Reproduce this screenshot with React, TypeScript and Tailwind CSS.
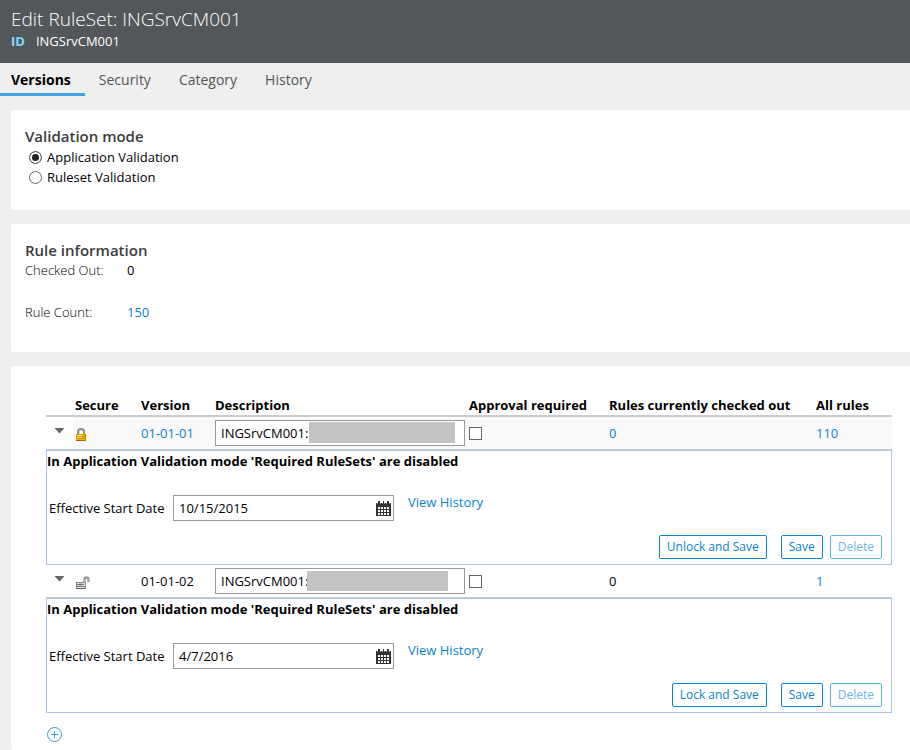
import React, { useState } from "react";

type Version = {
  id: string;
  locked: boolean;
  description: string;
  redaction: string;
  checkedOut: number;
  total: number;
  date: string;
};

const versions: Version[] = [
  {
    id: "01-01-01",
    locked: true,
    description: "INGSrvCM001:",
    redaction: "left-[94px] top-[2px] h-[21px] w-[146px]",
    checkedOut: 0,
    total: 110,
    date: "10/15/2015",
  },
  {
    id: "01-01-02",
    locked: false,
    description: "INGSrvCM001:",
    redaction: "left-[92px] top-[3px] h-5 w-[141px]",
    checkedOut: 0,
    total: 1,
    date: "4/7/2016",
  },
];

const tabs = ["Versions", "Security", "Category", "History"];

const linkClass = "text-[#0a84cc] hover:underline";

function LockedIcon() {
  return (
    <svg width="12" height="14" viewBox="0 0 12 14" aria-hidden="true">
      <path d="M3 7V3.500C3 1.800 4.200 1 6 1s3 .8 3 2.500V7" fill="none" stroke="#8d8d8d" strokeWidth="2" />
      <path d="M4.500 6V4c0-1 .6-1.500 1.500-1.500" fill="none" stroke="#d8d8d8" strokeWidth="1" />
      <rect x="1" y="6" width="10" height="7" fill="#f5b800" />
      <path d="M1 6h10v1H1z" fill="#d99a00" />
      <path d="M2 7h5v1H2z" fill="#ffe98a" />
      <path d="M2 9h5v1H2z" fill="#ffe36a" />
      <path d="M1 8h10v1H1zM1 10h10v1H1z" fill="#cf9408" />
      <path d="M1 12h10v1H1z" fill="#9a6a00" />
      <path d="M10 6h1v7h-1z" fill="#b67d00" />
    </svg>
  );
}

function UnlockedIcon() {
  return (
    <svg width="15" height="14" viewBox="-1 0 15 14" aria-hidden="true">
      <path d="M8.500 7V3.500C8.500 2 9.300 1.500 10.500 1.500s2 .6 2 2V6" fill="none" stroke="#707070" strokeWidth="2" />
      <path d="M8.500 6V3.500c0-1 .8-1.800 2-1.800s1.800.6 1.800 1.800V6" fill="none" stroke="#e4e4e4" strokeWidth="0.6" />
      <rect x="0.500" y="6.500" width="9" height="6" fill="#e9e9e9" stroke="#8a8a8a" />
      <path d="M1 8.500h7M1 10.500h8" stroke="#767676" strokeWidth="1" />
      <path d="M3 7.500h4M2 9.500h4" stroke="#c4c4c4" strokeWidth="1" />
      <path d="M0 12.500h9" stroke="#666" strokeWidth="1" />
    </svg>
  );
}

function CalendarIcon() {
  return (
    <svg width="15" height="17" viewBox="0 0 15 17" shapeRendering="crispEdges" aria-hidden="true">
      <path d="M0 3h15v13H0z" fill="#333" />
      <path d="M2 1h2v3H2zM7 1h1v3H7zM11 1h2v3h-2z" fill="#333" />
      <path d="M1 3h1v1H1zM4 3h1v1H4zM6 3h1v1H6zM8 3h1v1H8zM10 3h1v1h-1zM13 3h1v1h-1z" fill="#999" />
      <path
        d="M2 7h2v2H2zM5 7h2v2H5zM8 7h2v2H8zM11 7h2v2h-2zM2 10h2v2H2zM5 10h2v2H5zM8 10h2v2H8zM11 10h2v2h-2zM2 13h2v2H2zM5 13h2v2H5zM8 13h2v2H8zM11 13h2v2h-2z"
        fill="#fff"
      />
    </svg>
  );
}

function ActionButton({ children, disabled }: { children: React.ReactNode; disabled?: boolean }) {
  return (
    <button
      type="button"
      disabled={disabled}
      className="h-6 rounded-xs border border-[#0a84cc] px-[7px] text-xs leading-5 text-[#0a84cc] disabled:border-[#5fb2e0] disabled:text-[#6cb8e2]"
    >
      {children}
    </button>
  );
}

function VersionRows({ version }: { version: Version }) {
  const dateId = `date-${version.id}`;
  const cell = version.locked ? "border-b border-[#ccc] bg-[#f9f9f9] px-0.5" : "border-b border-[#ccc] px-0.5";
  return (
    <>
      <tr className="h-[33px]">
        <td className="border-b border-[#ccc] pb-1 pl-2">
          <button type="button" aria-label={`Collapse ${version.id}`} className="block">
            <svg width="11" height="6" viewBox="0 0 11 6" aria-hidden="true">
              <path d="M0.500 0h10L5.500 5.500z" fill="#666" />
            </svg>
          </button>
        </td>
        <td className={cell}>
          <div className="pt-1">{version.locked ? <LockedIcon /> : <UnlockedIcon />}</div>
        </td>
        <td className={cell}>
          {version.locked ? (
            <a href="#version" className={linkClass}>{version.id}</a>
          ) : (
            version.id
          )}
        </td>
        <td className={cell}>
          <div className="relative w-[250px]">
            <input
              type="text"
              aria-label={`Description of ${version.id}`}
              defaultValue={version.description}
              className="block h-[26px] w-full border border-[#999] bg-white px-[5px] text-[13px]"
            />
            <span className={`absolute bg-[#c3c3c3] ${version.redaction}`} />
          </div>
        </td>
        <td className={cell}>
          <input
            type="checkbox"
            aria-label={`Approval required for ${version.id}`}
            className="block size-[13px] appearance-none border border-[#666] bg-white checked:bg-[#666]"
          />
        </td>
        <td className={cell}>
          {version.locked ? <a href="#checked-out" className={linkClass}>{version.checkedOut}</a> : version.checkedOut}
        </td>
        <td className={cell}>
          <a href="#rules" className={linkClass}>{version.total}</a>
        </td>
      </tr>
      <tr>
        <td colSpan={7}>
          <div className="flex flex-col border border-[#a9c6ea] pb-[5px]">
            <p className="h-11 font-bold">In Application Validation mode 'Required RuleSets' are disabled</p>
            <div className="flex pl-0.5">
              <label htmlFor={dateId} className="w-[124px] leading-[26px]">Effective Start Date</label>
              <div className="flex h-[26px] w-[221px] items-center border border-[#999] pr-0.5">
                <input
                  id={dateId}
                  type="text"
                  defaultValue={version.date}
                  className="h-full min-w-0 flex-1 pl-[5px] text-[13px] outline-none"
                />
                <button type="button" aria-label="Choose date">
                  <CalendarIcon />
                </button>
              </div>
              <a href="#history" className={`ml-3.5 -mt-[3px] ${linkClass}`}>View History</a>
            </div>
            <div className="mt-3.5 flex justify-end pr-[9px]">
              <ActionButton>{version.locked ? "Unlock and Save" : "Lock and Save"}</ActionButton>
              <div className="ml-3.5 flex gap-[7px]">
                <ActionButton>Save</ActionButton>
                <ActionButton disabled>Delete</ActionButton>
              </div>
            </div>
          </div>
        </td>
      </tr>
    </>
  );
}

export default function App() {
  const [mode, setMode] = useState("Application Validation");
  return (
    <div className="flex min-h-screen flex-col bg-[#efefef] font-['Open_Sans','Noto_Sans',sans-serif] text-[13px] leading-5 text-black">
      <header className="h-[63px] bg-[#53565b] px-[11px] pt-[7px] text-white">
        <h1 className="text-[19px] leading-6 font-light">Edit RuleSet: INGSrvCM001</h1>
        <p className="flex gap-[11px]">
          <span className="font-bold text-[#7fdbff]">ID</span>
          <span>INGSrvCM001</span>
        </p>
      </header>

      <nav className="mb-3.5 flex h-[33px] text-sm leading-[34px] text-[#555]">
        {tabs.map((tab) => (
          <a
            key={tab}
            href={`#${tab.toLowerCase()}`}
            className={
              tab === "Versions"
                ? "border-b-3 border-[#45a2e0] pr-3.5 pl-[11px] font-bold text-black"
                : "px-3.5"
            }
          >
            {tab}
          </a>
        ))}
      </nav>

      <main className="flex grow flex-col gap-3.5 pl-[11px]">
        <fieldset className="h-[100px] rounded-l-xs bg-white px-3.5 pt-4">
          <legend className="float-left mb-px w-full text-[15px] font-semibold text-[#3c3c3c]">Validation mode</legend>
          {["Application Validation", "Ruleset Validation"].map((name) => (
            <label key={name} className="clear-both flex items-center gap-[5px] pl-1">
              <input
                type="radio"
                name="mode"
                checked={mode === name}
                onChange={() => setMode(name)}
                className="size-[13px] appearance-none rounded-full border border-[#666] bg-white checked:bg-[#222] checked:inset-ring-2 checked:inset-ring-white"
              />
              {name}
            </label>
          ))}
        </fieldset>

        <section className="h-32 rounded-l-xs bg-white px-3.5 pt-4">
          <h2 className="text-[15px] font-semibold text-[#3c3c3c]">Rule information</h2>
          <dl className="grid grid-cols-[102px_1fr] gap-y-[22px]">
            <dt className="font-light">Checked Out:</dt>
            <dd>0</dd>
            <dt className="font-light">Rule Count:</dt>
            <dd><a href="#rule-count" className={linkClass}>150</a></dd>
          </dl>
        </section>

        <section className="grow rounded-l-xs bg-white pt-[29px] pr-[18px] pb-2 pl-[35px]">
          <table className="w-full table-fixed border-separate border-spacing-0">
            <colgroup>
              <col className="w-[27px]" />
              <col className="w-[66px]" />
              <col className="w-[74px]" />
              <col className="w-[254px]" />
              <col className="w-[140px]" />
              <col className="w-[207px]" />
              <col />
            </colgroup>
            <thead>
              <tr className="h-[22px] text-left">
                {["", "Secure", "Version", "Description", "Approval required", "Rules currently checked out", "All rules"].map(
                  (heading) => (
                    <th key={heading} className="border-b-2 border-[#ccc] px-0.5 font-bold whitespace-nowrap">
                      {heading}
                    </th>
                  ),
                )}
              </tr>
            </thead>
            <tbody>
              {versions.map((version) => (
                <VersionRows key={version.id} version={version} />
              ))}
            </tbody>
          </table>
          <button type="button" aria-label="Add version" className="mt-3.5 ml-px block">
            <svg width="15" height="15" viewBox="0 0 15 15" fill="none" stroke="#3d9fd8" aria-hidden="true">
              <circle cx="7.500" cy="7.500" r="7" />
              <path d="M7.500 4v7M4 7.500h7" />
            </svg>
          </button>
        </section>
      </main>
    </div>
  );
}
